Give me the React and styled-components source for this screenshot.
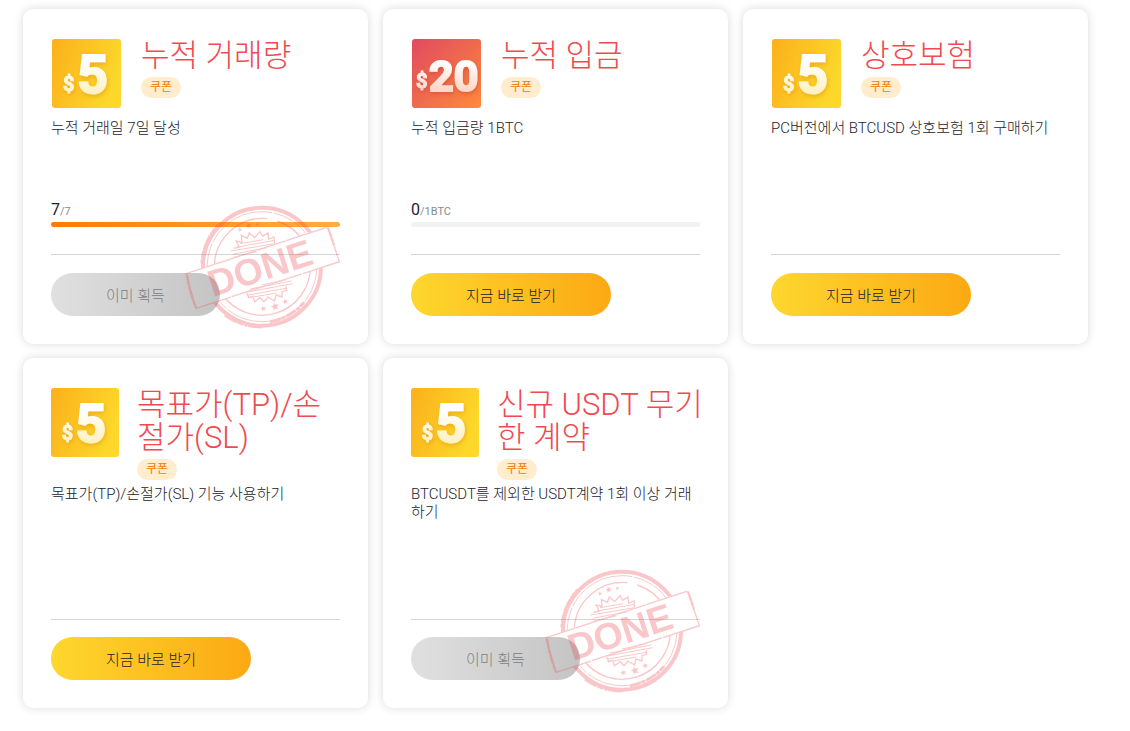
import React from 'react';
import styled, { createGlobalStyle } from 'styled-components';

const GlobalStyle = createGlobalStyle`
  * { box-sizing: border-box; }
  body {
    margin: 0;
    background: #fff;
    color: #22222c;
    font-family: Roboto, "Noto Sans CJK KR", sans-serif;
    font-weight: 300;
    word-break: break-all;
  }
`;

const CardGrid = styled.main`
  display: grid;
  grid-template-columns: repeat(3, minmax(0, 1fr));
  gap: 14px 15px;
  padding: 9px 42px 20px 23px;
`;

const Card = styled.article`
  position: relative;
  padding: 30px 28px 28px;
  border-radius: 10px;
  background: #fff;
  box-shadow: 0 0 10px rgba(0, 0, 0, 0.15);
`;

const CardHead = styled.header`
  display: flex;
  align-items: flex-start;
  gap: ${(p) => (p.$compact ? 18 : 20)}px;
  margin-bottom: 4px;
`;

const CouponIcon = styled.svg`
  flex: none;
  width: ${(p) => (p.$compact ? 68 : 70)}px;
  height: 69px;
  margin-bottom: 6px;
`;

const HeadText = styled.div`
  flex: 1;
  min-width: 0;
  margin-right: -6px;
`;

const Title = styled.h2`
  margin: 0 0 5px;
  color: #f04a50;
  font-size: 31px;
  font-weight: 300;
  line-height: 33px;
`;

const Badge = styled.span`
  display: block;
  width: fit-content;
  padding: 0 9px;
  border-radius: 11px;
  background: #ffedcd;
  color: #f57c00;
  font-size: 12px;
  font-weight: 400;
  line-height: 21px;
`;

const Body = styled.div`
  display: flex;
  flex-direction: column;
  justify-content: space-between;
  min-height: ${(p) => (p.$compact ? 135 : 136)}px;
  padding-bottom: 27px;
`;

const Description = styled.p`
  margin: 0;
  padding-top: 1px;
  font-size: 15px;
  line-height: 18px;
`;

const Count = styled.div`
  font-size: 16px;
  font-weight: 400;
  line-height: 20px;
`;

const CountTotal = styled.span`
  color: #858c8f;
  font-size: 11px;
`;

const Track = styled.div`
  height: 5px;
  border-radius: 2px;
  overflow: hidden;
  background: #f4f2f0;
`;

const Fill = styled.div`
  height: 100%;
  border-radius: 2px;
  background: linear-gradient(90deg, #ff7a00, #ffb03b);
`;

const Footer = styled.footer`
  padding-top: ${(p) => (p.$compact ? 17 : 18)}px;
  border-top: 1px solid #d6d6d6;
`;

const ClaimButton = styled.button`
  display: block;
  height: 43px;
  padding: 0 55px;
  border: 0;
  border-radius: 22px;
  background: linear-gradient(90deg, #fdd72e, #fca913);
  color: #22222c;
  font: inherit;
  font-size: 15px;
  cursor: pointer;

  &:disabled {
    background: linear-gradient(90deg, #e0e0e0, #c4c4c4);
    color: #808080;
    cursor: default;
  }
`;

const StampArt = styled.svg`
  position: absolute;
  right: 28px;
  bottom: 15px;
  width: 155px;
  height: 124px;
  pointer-events: none;
`;

function Coupon({ amount, id, compact }) {
  const big = amount === 20;
  return (
    <CouponIcon $compact={compact} viewBox={compact ? '1 0 69 69' : '0 0 70 69'} preserveAspectRatio="none" role="img" aria-label={`$${amount}`}>
      <defs>
        <linearGradient id={`bg-${id}`} x1="0" y1="0" x2="1" y2={big ? 1 : 0.35}>
          <stop offset="0" stopColor={big ? '#e04a60' : '#fbb01b'} />
          <stop offset="1" stopColor={big ? '#ff8a3b' : '#fdd72a'} />
        </linearGradient>
        <linearGradient id={`ink-${id}`} gradientUnits="userSpaceOnUse" x1="0" y1="14" x2="0" y2="56">
          <stop offset="0.2" stopColor="#fff" />
          <stop offset="1" stopColor={big ? '#ffd0c0' : '#fff0bd'} />
        </linearGradient>
        <filter id={`glow-${id}`} x="-30%" y="-30%" width="160%" height="160%">
          <feDropShadow dx="1" dy="2" stdDeviation="2" floodColor={big ? '#c03a28' : '#d98c00'} floodOpacity="0.45" />
        </filter>
      </defs>
      <rect x="1" width="69" height="69" rx="3" fill={`url(#bg-${id})`} />
      <g
        fill={`url(#ink-${id})`}
        stroke={`url(#ink-${id})`}
        filter={`url(#glow-${id})`}
        fontFamily="Roboto, sans-serif"
        fontWeight="700"
      >
        <text x={big ? 5 : 12} y={big ? 49 : 52} fontSize="20" strokeWidth="1">$</text>
        <text x={big ? 18 : 26} y={big ? 52 : 54} fontSize={big ? 43 : 54} strokeWidth="2">{amount}</text>
      </g>
    </CouponIcon>
  );
}

function Star({ x, y, r }) {
  const pts = Array.from({ length: 10 }, (_, i) => {
    const a = (Math.PI * i) / 5 - Math.PI / 2 - 0.3;
    const k = i % 2 ? r * 0.45 : r;
    return `${x + k * Math.cos(a)},${y + k * Math.sin(a)}`;
  }).join(' ');
  return <polygon points={pts} />;
}

function DoneStamp({ id }) {
  return (
    <StampArt viewBox="15 30 465 372" role="img" aria-label="DONE">
      <defs>
        <clipPath id={`around-${id}`}>
          <path clipRule="evenodd" d="M0 0H500V420H0ZM15 236L443 94 480 200 45 342Z" />
        </clipPath>
      </defs>
      <g opacity="0.3" fill="none" stroke="#ee4a4e">
        <g clipPath={`url(#around-${id})`}>
          <circle cx="246" cy="215" r="177" strokeWidth="12" />
          <circle cx="246" cy="215" r="165" strokeWidth="3" strokeDasharray="150 6 60 3" />
          <path strokeWidth="4" d="M103 215A145 145 0 0 1 262 71M292 78A145 145 0 0 1 372 142M391 215A145 145 0 0 1 128 300" />
          <path strokeWidth="10" strokeDasharray="13 3 22 4 6 2" d="M66 206A180 180 0 0 1 114 92" />
          <path strokeWidth="10" strokeDasharray="40 3 18 5 9 2" d="M135 360A182 182 0 0 0 250 395" />
          <path strokeWidth="9" strokeDasharray="34 2 12 3" d="M270 380A168 168 0 0 0 372 322" />
        </g>
        <path strokeWidth="4" d="M160 160L178 156 168 138 186 142 184 122 202 130 208 114 224 128 240 110 248 124 264 114 266 132 282 126 284 144M200 294L206 308 218 304 224 320 240 308 252 320 264 306 284 318 288 300 306 306 306 290 320 286 318 274" />
        <path strokeWidth="3" d="M152 168L284 146M158 178L262 158M172 156L284 136M180 146L250 134M160 187L230 170M204 300L318 280M202 291L338 266M210 282L334 258M246 270L318 254M220 306L290 294" />
        <path strokeWidth="4" strokeDasharray="90 2 130 3" d="M18 236L443 96 478 200 48 340Z" />
        <path strokeWidth="7" strokeDasharray="30 2 14 2" d="M21 240Q28 290 48 338M444 98L462 150" />
      </g>
      <g fill="#ee4a4e" opacity="0.3">
        <Star x={180} y={104} r={7} />
        <Star x={206} y={92} r={10} />
        <Star x={232} y={88} r={6} />
        <Star x={250} y={341} r={9} />
        <Star x={285} y={335} r={13} />
        <Star x={316} y={320} r={9} />
        <text transform="translate(98 306) rotate(-18)" fontFamily="Liberation Sans, Arial, sans-serif" fontWeight="700" fontSize="112">DONE</text>
      </g>
    </StampArt>
  );
}

const tasks = [
  { id: 'volume', amount: 5, title: '누적 거래량', text: '누적 거래일 7일 달성', progress: { now: 7, max: 7, unit: '' }, done: true },
  { id: 'deposit', amount: 20, title: '누적 입금', text: '누적 입금량 1BTC', progress: { now: 0, max: 1, unit: 'BTC' } },
  { id: 'insurance', amount: 5, title: '상호보험', text: 'PC버전에서 BTCUSD 상호보험 1회 구매하기' },
  { id: 'tpsl', amount: 5, title: '목표가(TP)/손절가(SL)', text: '목표가(TP)/손절가(SL) 기능 사용하기', compact: true },
  { id: 'usdt', amount: 5, title: '신규 USDT 무기한 계약', text: 'BTCUSDT를 제외한 USDT계약 1회 이상 거래하기', compact: true, done: true },
];

function TaskCard({ task }) {
  const { id, amount, title, text, progress, done, compact } = task;
  return (
    <Card>
      <CardHead $compact={compact}>
        <Coupon amount={amount} id={id} compact={compact} />
        <HeadText>
          <Title>{title}</Title>
          <Badge>쿠폰</Badge>
        </HeadText>
      </CardHead>
      <Body $compact={compact}>
        <Description>{text}</Description>
        {progress && (
          <div>
            <Count>
              {progress.now}
              <CountTotal>/{progress.max}{progress.unit}</CountTotal>
            </Count>
            <Track role="progressbar" aria-label={title} aria-valuenow={progress.now} aria-valuemax={progress.max}>
              <Fill style={{ width: `${(progress.now / progress.max) * 100}%` }} />
            </Track>
          </div>
        )}
      </Body>
      <Footer $compact={compact}>
        <ClaimButton type="button" disabled={done}>{done ? '이미 획득' : '지금 바로 받기'}</ClaimButton>
      </Footer>
      {done && <DoneStamp id={id} />}
    </Card>
  );
}

export default function App() {
  return (
    <>
      <GlobalStyle />
      <CardGrid>
        {tasks.map((task) => <TaskCard key={task.id} task={task} />)}
      </CardGrid>
    </>
  );
}
